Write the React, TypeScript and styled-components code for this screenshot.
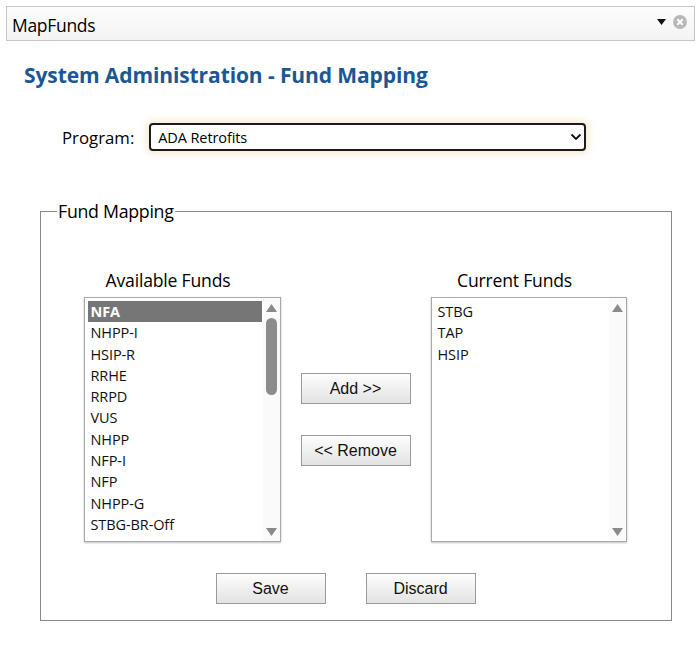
import React from "react";
import styled, { createGlobalStyle } from "styled-components";

const GlobalStyle = createGlobalStyle`
	html, body {
		margin: 0;
		padding: 0;
		background: #fff;
		font-family: "Open Sans", "Noto Sans", sans-serif;
		color: #000;
	}
`;

const Page = styled.div`
	width: 699px;
	height: 650px;
	padding: 6px 4px 0 6px;
	box-sizing: border-box;
`;

const TitleBar = styled.div`
	height: 35px;
	border: 1px solid #c6c6c6;
	background: linear-gradient(#fdfdfd, #f3f3f3);
	display: flex;
	align-items: center;
	padding: 0 7px 0 5px;
	box-sizing: border-box;
`;

const TitleText = styled.div`
	flex: 1;
	font-size: 17.5px;
	letter-spacing: -0.3px;
	margin-top: 3px;
`;

const TitleIcons = styled.div`
	display: flex;
	align-items: center;
	gap: 7px;
	margin-top: -4px;
`;

const Heading = styled.h1`
	margin: 20px 0 0 18px;
	font-size: 21px;
	font-weight: 700;
	color: #1b5794;
	letter-spacing: -0.1px;
`;

const ProgramRow = styled.div`
	display: flex;
	align-items: center;
	margin: 34px 0 0 56px;
	gap: 15px;
`;

const Label = styled.label`
	font-size: 16.8px;
	letter-spacing: 0;
`;

const SelectBox = styled.div`
	width: 437px;
	height: 28px;
	box-sizing: border-box;
	border: 2px solid #1a1a1a;
	border-radius: 4px;
	display: flex;
	align-items: center;
	justify-content: space-between;
	padding: 0 2px 0 7px;
	font-size: 14.5px;
	letter-spacing: -0.1px;
	box-shadow: 0 0 6px 3px rgba(240, 218, 170, 0.5);
`;

const FieldSet = styled.fieldset`
	margin: 48px 0 0 34px;
	width: 632px;
	height: 422px;
	box-sizing: border-box;
	border: 1px solid #8a8a8a;
	padding: 0;
`;

const Legend = styled.legend`
	margin-left: 16px;
	padding: 0 1px;
	font-size: 17.8px;
	letter-spacing: -0.3px;
`;

const Columns = styled.div`
	display: flex;
	justify-content: center;
	gap: 20px;
	margin-top: 47px;
	padding-right: 2px;
`;

const Column = styled.div`
	display: flex;
	flex-direction: column;
	align-items: stretch;
`;

const ColumnLabel = styled.div`
	font-size: 17.6px;
	text-align: center;
	padding-right: 28px;
	height: 20px;
	line-height: 20px;
	margin-bottom: 7px;
	letter-spacing: -0.2px;
`;

const ListBox = styled.div<{ $width: number }>`
	width: ${(p) => p.$width}px;
	height: 245px;
	box-sizing: border-box;
	border: 1px solid #a8a8a8;
	box-shadow: 0 1px 2px rgba(0, 0, 0, 0.25);
	display: flex;
	overflow: hidden;
	background: #fff;
`;

const Items = styled.div`
	flex: 1;
	padding: 3px 0 0 3px;
	overflow: hidden;
`;

const Item = styled.div<{ $selected?: boolean }>`
	height: 21.3px;
	line-height: 21.3px;
	font-size: 14.5px;
	padding-left: 3px;
	margin-right: 1px;
	white-space: nowrap;
	letter-spacing: -0.1px;
	color: ${(p) => (p.$selected ? "#fff" : "#111")};
	background: ${(p) => (p.$selected ? "#767676" : "transparent")};
	font-weight: ${(p) => (p.$selected ? 700 : 400)};
`;

const ScrollTrack = styled.div`
	width: 17px;
	background: #fafafa;
	display: flex;
	flex-direction: column;
	align-items: center;
	padding: 6px 0 5px;
	box-sizing: border-box;
`;

const Thumb = styled.div`
	width: 11px;
	height: 77px;
	border-radius: 6px;
	background: #8c8c8c;
	margin-top: 6px;
`;

const Spacer = styled.div`
	flex: 1;
`;

const Middle = styled.div`
	display: flex;
	flex-direction: column;
	padding-top: 103px;
	gap: 31px;
`;

const Button = styled.button`
	width: 110px;
	height: 31px;
	border: 1px solid #9a9a9a;
	background: linear-gradient(#fdfdfd, #e3e3e3);
	font-family: "Liberation Sans", Arial, sans-serif;
	font-size: 16px;
	color: #111;
	padding: 0;
	cursor: pointer;
`;

const Actions = styled.div`
	display: flex;
	justify-content: center;
	gap: 40px;
	padding-right: 21px;
	margin-top: 31px;
`;

const Arrow: React.FC<{ up?: boolean }> = ({ up }) => (
	<svg width="11" height="8" viewBox="0 0 11 8">
		<polygon points={up ? "5.5,0 11,8 0,8" : "0,0 11,0 5.5,8"} fill="#8a8a8a" />
	</svg>
);

const ScrollBar: React.FC<{ thumb?: boolean }> = ({ thumb }) => (
	<ScrollTrack>
		<Arrow up />
		{thumb && <Thumb />}
		<Spacer />
		<Arrow />
	</ScrollTrack>
);

const available = [
	"NFA",
	"NHPP-I",
	"HSIP-R",
	"RRHE",
	"RRPD",
	"VUS",
	"NHPP",
	"NFP-I",
	"NFP",
	"NHPP-G",
	"STBG-BR-Off",
	"RRS",
];

const current = ["STBG", "TAP", "HSIP"];

const App: React.FC = () => {
	return (
		<>
			<GlobalStyle />
			<Page>
				<TitleBar>
					<TitleText>MapFunds</TitleText>
					<TitleIcons>
						<svg width="9" height="6" viewBox="0 0 9 6">
							<polygon points="0,0 9,0 4.5,6" fill="#111" />
						</svg>
						<svg width="14" height="14" viewBox="0 0 14 14">
							<circle cx="7" cy="7" r="7" fill="#b8b8b8" />
							<path d="M4.3 4.3 L9.7 9.7 M9.7 4.3 L4.3 9.7" stroke="#fff" strokeWidth="2" />
						</svg>
					</TitleIcons>
				</TitleBar>
				<Heading>System Administration - Fund Mapping</Heading>
				<ProgramRow>
					<Label>Program:</Label>
					<SelectBox>
						<span>ADA Retrofits</span>
						<svg width="12" height="8" viewBox="0 0 12 8">
							<path d="M1.5 1.5 L6 6 L10.5 1.5" fill="none" stroke="#111" strokeWidth="1.8" />
						</svg>
					</SelectBox>
				</ProgramRow>
				<FieldSet>
					<Legend>Fund Mapping</Legend>
					<Columns>
						<Column>
							<ColumnLabel>Available Funds</ColumnLabel>
							<ListBox $width={197}>
								<Items>
									{available.map((f, i) => (
										<Item key={f} $selected={i === 0}>
											{f}
										</Item>
									))}
								</Items>
								<ScrollBar thumb />
							</ListBox>
						</Column>
						<Middle>
							<Button>Add &gt;&gt;</Button>
							<Button>&lt;&lt; Remove</Button>
						</Middle>
						<Column>
							<ColumnLabel>Current Funds</ColumnLabel>
							<ListBox $width={196}>
								<Items>
									{current.map((f) => (
										<Item key={f}>{f}</Item>
									))}
								</Items>
								<ScrollBar />
							</ListBox>
						</Column>
					</Columns>
					<Actions>
						<Button>Save</Button>
						<Button>Discard</Button>
					</Actions>
				</FieldSet>
			</Page>
		</>
	);
};

export default App;
